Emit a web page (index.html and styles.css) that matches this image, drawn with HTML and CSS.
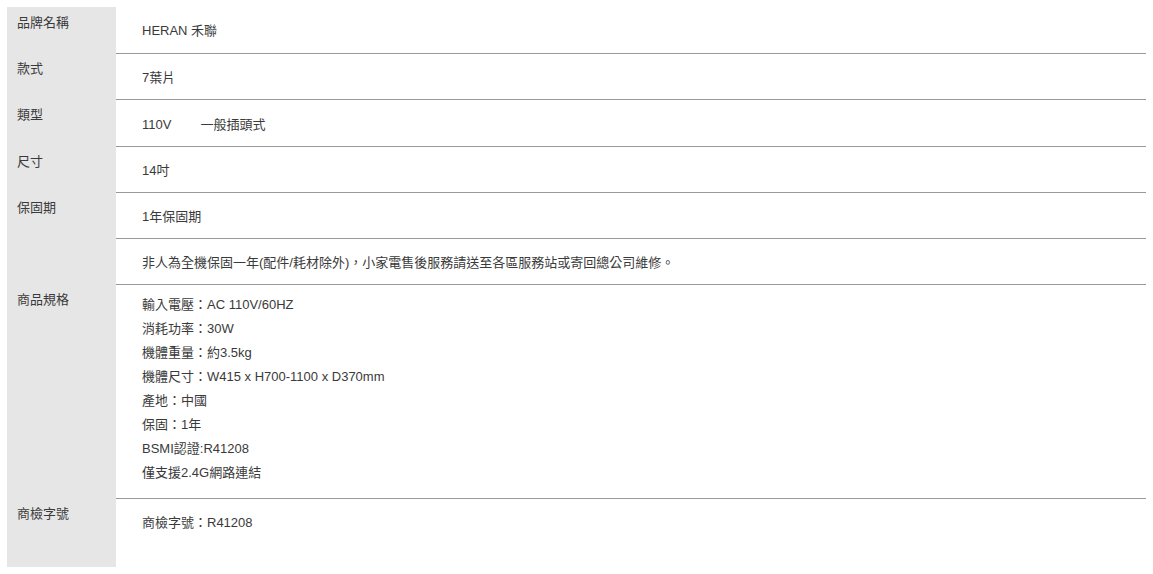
FILE: index.html
```html
<!DOCTYPE html>
<html lang="zh-Hant">
<head>
    <meta charset="utf-8">
    <title>商品規格</title>
    <link rel="stylesheet" href="styles.css">
</head>
<body>
    <table class="spec-table">
        <tbody>
            <tr>
                <th>品牌名稱</th>
                <td>HERAN 禾聯</td>
            </tr>
            <tr>
                <th>款式</th>
                <td>7葉片</td>
            </tr>
            <tr class="tall">
                <th>類型</th>
                <td><span class="gap">110V</span>一般插頭式</td>
            </tr>
            <tr>
                <th>尺寸</th>
                <td>14吋</td>
            </tr>
            <tr>
                <th rowspan="2">保固期</th>
                <td>1年保固期</td>
            </tr>
            <tr>
                <td>非人為全機保固一年(配件/耗材除外)，小家電售後服務請送至各區服務站或寄回總公司維修。</td>
            </tr>
            <tr>
                <th>商品規格</th>
                <td class="spec-list">
                    輸入電壓：AC 110V/60HZ<br>
                    消耗功率：30W<br>
                    機體重量：約3.5kg<br>
                    機體尺寸：W415 x H700-1100 x D370mm<br>
                    產地：中國<br>
                    保固：1年<br>
                    BSMI認證:R41208<br>
                    僅支援2.4G網路連結
                </td>
            </tr>
            <tr class="last">
                <th>商檢字號</th>
                <td>商檢字號：R41208</td>
            </tr>
        </tbody>
    </table>
</body>
</html>
```

FILE: styles.css
```css
:root {
    --text-color: #3a3a3a;
    --label-bg: #e6e6e6;
    --line-color: #999;
}

* {
    margin: 0;
    padding: 0;
    box-sizing: border-box;
}

body {
    font-family: "Liberation Sans", "Noto Sans CJK TC", sans-serif;
    font-size: 13px;
    color: var(--text-color);
    background: #fff;
    padding: 7px;
}

.spec-table {
    width: 1139px;
    border-collapse: collapse;
    border-spacing: 0;
}

.spec-table th {
    width: 109px;
    background: var(--label-bg);
    font-weight: normal;
    text-align: left;
    vertical-align: top;
    line-height: 24px;
    padding: 4px 0 0 10px;
}

.spec-table td {
    height: 46px;
    line-height: 24px;
    padding: 12px 0 9px 26px;
    border-bottom: 1px solid var(--line-color);
    vertical-align: top;
}

.spec-table .tall td {
    height: 47px;
    padding-top: 13px;
}

.gap {
    margin-right: 29px;
}

.spec-table td.spec-list {
    padding: 8px 0 13px 26px;
}

.spec-table .last td {
    height: 69px;
    border-bottom: none;
}
```
